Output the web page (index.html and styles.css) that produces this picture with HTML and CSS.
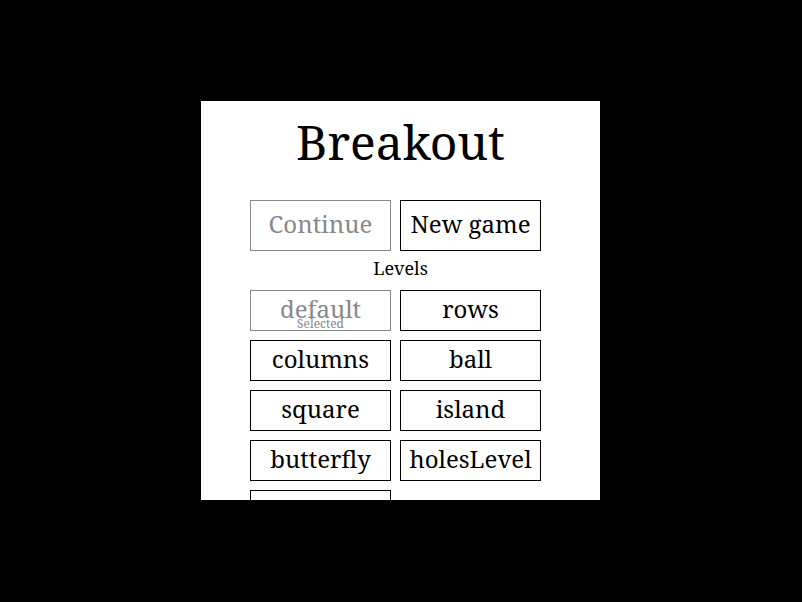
FILE: index.html
```html
<!DOCTYPE html>
<html lang="en">
<head>
<meta charset="utf-8">
<title>Breakout</title>
<link rel="stylesheet" href="styles.css">
</head>
<body>
<div class="panel">
  <h1 class="title">Breakout</h1>
  <div class="actions">
    <button class="btn btn-main is-disabled">Continue</button>
    <button class="btn btn-main">New game</button>
  </div>
  <div class="levels-label">Levels</div>
  <div class="levels">
    <button class="btn btn-level is-disabled">default<span class="selected-tag">Selected</span></button>
    <button class="btn btn-level">rows</button>
    <button class="btn btn-level">columns</button>
    <button class="btn btn-level">ball</button>
    <button class="btn btn-level">square</button>
    <button class="btn btn-level">island</button>
    <button class="btn btn-level">butterfly</button>
    <button class="btn btn-level">holesLevel</button>
    <button class="btn btn-level">invaders</button>
  </div>
</div>
</body>
</html>
```

FILE: styles.css
```css
html, body {
  margin: 0;
  padding: 0;
  background: #000;
}
body {
  width: 802px;
  height: 602px;
  overflow: hidden;
  font-family: "Noto Serif", "DejaVu Serif", serif;
}
.panel {
  margin: 101px 0 0 201px;
  width: 399px;
  height: 399px;
  background: #fff;
  overflow: hidden;
}
.title {
  margin: 0;
  padding-top: 13px;
  font-size: 48px;
  font-weight: normal;
  line-height: 56px;
  text-align: center;
  color: #000;
}
.actions, .levels {
  display: grid;
  grid-template-columns: 141px 141px;
  column-gap: 9px;
  row-gap: 9px;
  padding-left: 49px;
}
.actions {
  margin-top: 30px;
}
.levels-label {
  text-align: center;
  font-size: 18px;
  line-height: 24px;
  margin: 5px 0 10px;
  color: #000;
}
.btn {
  position: relative;
  box-sizing: border-box;
  margin: 0;
  padding: 0;
  border: 1px solid #000;
  background: #fff;
  color: #000;
  font-family: inherit;
  font-size: 24px;
  white-space: nowrap;
  overflow: hidden;
}
.btn-main {
  height: 51px;
  padding-bottom: 4px;
}
.btn-level {
  height: 41px;
  padding-bottom: 4px;
}
.is-disabled {
  color: #888;
  border-color: #888;
}
.selected-tag {
  position: absolute;
  left: 0;
  right: 0;
  bottom: 0;
  font-size: 12px;
  line-height: 13px;
  text-align: center;
  color: #888;
}
```
